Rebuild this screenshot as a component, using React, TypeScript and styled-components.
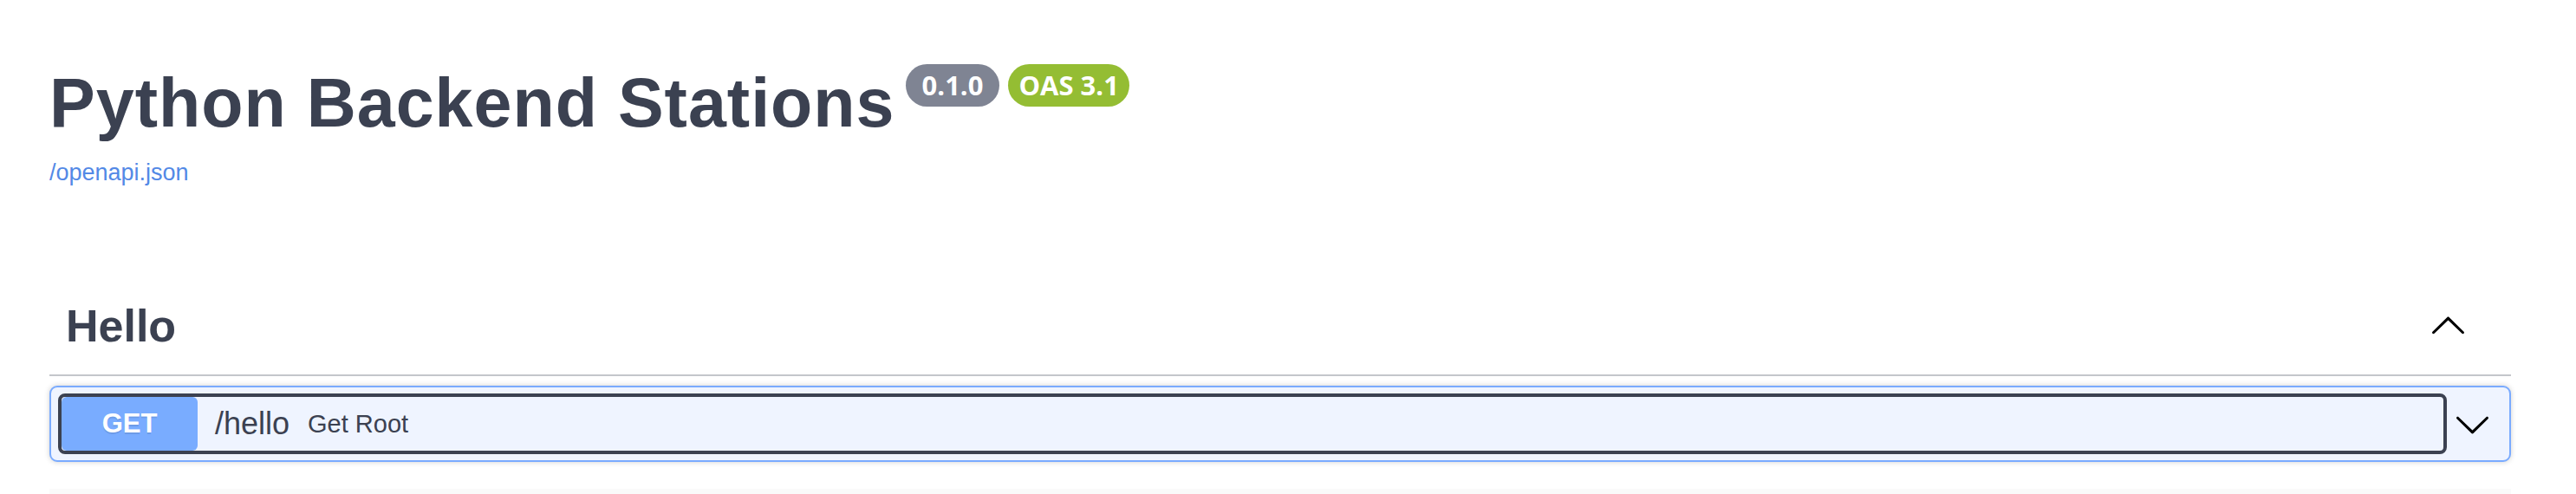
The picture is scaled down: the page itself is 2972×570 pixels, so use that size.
import React from 'react';
import styled, { createGlobalStyle } from 'styled-components';

const GlobalStyle = createGlobalStyle`
  body {
    margin: 0;
    background: #fff;
    font-family: 'Liberation Sans', Arial, sans-serif;
    color: #3b4151;
  }
`;

const Wrapper = styled.div`
  padding: 0 75px 0 57px;
`;

const Info = styled.div`
  padding-top: 74px;
`;

const TitleRow = styled.div`
  display: flex;
  align-items: flex-start;
`;

const Title = styled.h2`
  margin: 6px 0 0;
  font-size: 79px;
  line-height: 77px;
  letter-spacing: 1px;
  font-weight: 700;
  color: #3b4151;
  white-space: nowrap;
`;

const Badges = styled.div`
  display: flex;
  gap: 10px;
  margin-left: 12px;
`;

const Badge = styled.span<{ $bg: string; $pad: number }>`
  display: inline-block;
  height: 49px;
  line-height: 49px;
  padding: 0 ${(p) => p.$pad}px;
  border-radius: 30px;
  background: ${(p) => p.$bg};
  color: #fff;
  font-family: 'Open Sans', sans-serif;
  font-weight: 700;
  font-size: 31px;
`;

const SpecLink = styled.a`
  display: block;
  margin-top: 29px;
  font-size: 27px;
  line-height: 27px;
  color: #5389e6;
  text-decoration: none;
`;

const TagSection = styled.div`
  margin-top: 107px;
`;

const TagHeader = styled.div`
  display: flex;
  align-items: center;
  height: 112px;
  padding: 0 51px 0 19px;
  border-bottom: 2px solid #c4c6cb;
`;

const TagTitle = styled.h3`
  flex: 1;
  margin: 0;
  font-size: 52px;
  line-height: 52px;
  font-weight: 700;
  color: #3b4151;
`;

const Arrow = styled.svg<{ $up?: boolean }>`
  width: 43px;
  height: 43px;
  flex-shrink: 0;
  transform: ${(p) => (p.$up ? 'rotate(180deg)' : 'none')};
`;

const Opblock = styled.div`
  margin-top: 11px;
  border: 2px solid #7aabff;
  border-radius: 9px;
  background: #eff4ff;
  box-shadow: 0 0 6px rgba(0, 0, 0, 0.19);
`;

const Summary = styled.div`
  display: flex;
  align-items: center;
  padding: 11px 21px 11px 12px;
`;

const SummaryControl = styled.div`
  flex: 1;
  display: flex;
  align-items: center;
  height: 62px;
  border-radius: 4px;
  outline: 4px solid #3b4151;
`;

const Method = styled.span`
  width: 157px;
  height: 62px;
  line-height: 62px;
  text-align: center;
  border-radius: 6px;
  background: #79acff;
  color: #fff;
  font-size: 31px;
  font-weight: 700;
  text-shadow: 0 2px 0 rgba(0, 0, 0, 0.1);
`;

const Path = styled.span`
  margin-left: 20px;
  font-size: 36px;
  color: #3b4151;
`;

const Description = styled.span`
  margin-left: 21px;
  font-size: 29px;
  color: #3b4151;
`;

const DownArrow = styled(Arrow)`
  margin-left: 12px;
`;

const NextSection = styled.div`
  margin-top: 31px;
  height: 40px;
  background: #fafafa;
`;

const arrowPath =
  'M17.418 6.109c.272-.268.709-.268.979 0s.271.701 0 .969l-7.908 7.83c-.27.268-.707.268-.979 0l-7.908-7.83c-.27-.268-.27-.701 0-.969.271-.268.709-.268.979 0L10 13.25l7.418-7.141z';

const App = () => {
  return (
    <Wrapper>
      <GlobalStyle />
      <Info>
        <TitleRow>
          <Title>Python Backend Stations</Title>
          <Badges>
            <Badge $bg="#7f8493" $pad={19}>0.1.0</Badge>
            <Badge $bg="#94bd33" $pad={12}>OAS 3.1</Badge>
          </Badges>
        </TitleRow>
        <SpecLink href="#">/openapi.json</SpecLink>
      </Info>
      <TagSection>
        <TagHeader>
          <TagTitle>Hello</TagTitle>
          <Arrow $up viewBox="0 0 20 20">
            <path d={arrowPath} fill="#000" />
          </Arrow>
        </TagHeader>
        <Opblock>
          <Summary>
            <SummaryControl>
              <Method>GET</Method>
              <Path>/hello</Path>
              <Description>Get Root</Description>
            </SummaryControl>
            <DownArrow viewBox="0 0 20 20">
              <path d={arrowPath} fill="#000" />
            </DownArrow>
          </Summary>
        </Opblock>
      </TagSection>
      <NextSection />
    </Wrapper>
  );
};

export default App;
